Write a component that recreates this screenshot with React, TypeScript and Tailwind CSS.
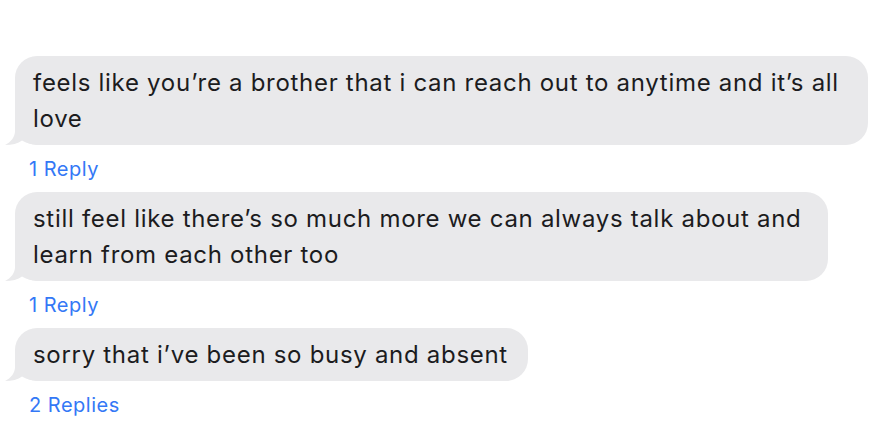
import React from "react";

function Tail() {
  return (
    <svg
      className="absolute left-[-10px] bottom-0"
      width="40"
      height="24"
      viewBox="0 0 40 24"
    >
      <path
        d="M10 0 L10 10 C10 16 6 21 0 24 C7 24 13 22.5 17 19.5 C22 22.5 28 24 40 24 L40 0 Z"
        fill="#E9E9EB"
      />
    </svg>
  );
}

function Bubble({ lines, width }: { lines: string[]; width?: string }) {
  return (
    <div
      className={`relative rounded-[22px] bg-[#E9E9EB] pl-[18px] pr-[20px] pt-[9px] pb-[8px] text-[24px] tracking-[0.7px] leading-[36px] text-[#1c1c1e] ${width ?? "w-fit"}`}
    >
      <Tail />
      <div className="relative">
        {lines.map((l, i) => (
          <div key={i} className="whitespace-nowrap">
            {l}
          </div>
        ))}
      </div>
    </div>
  );
}

function Reply({ text }: { text: string }) {
  return (
    <div className="h-[47px] pl-[14px] flex items-center text-[20px] tracking-[0.5px] text-[#3478F6]">
      {text}
    </div>
  );
}

export default function App() {
  return (
    <div
      className="w-[888px] h-[448px] bg-white pt-[56px] pl-[15px] overflow-hidden"
      style={{ fontFamily: "Inter, 'Noto Sans', sans-serif" }}
    >
      <Bubble
        width="w-[853px]"
        lines={[
          "feels like you\u2019re a brother that i can reach out to anytime and it\u2019s all",
          "love",
        ]}
      />
      <Reply text="1 Reply" />
      <Bubble
        width="w-[813px]"
        lines={[
          "still feel like there\u2019s so much more we can always talk about and",
          "learn from each other too",
        ]}
      />
      <Reply text="1 Reply" />
      <Bubble lines={["sorry that i\u2019ve been so busy and absent"]} />
      <Reply text="2 Replies" />
    </div>
  );
}
